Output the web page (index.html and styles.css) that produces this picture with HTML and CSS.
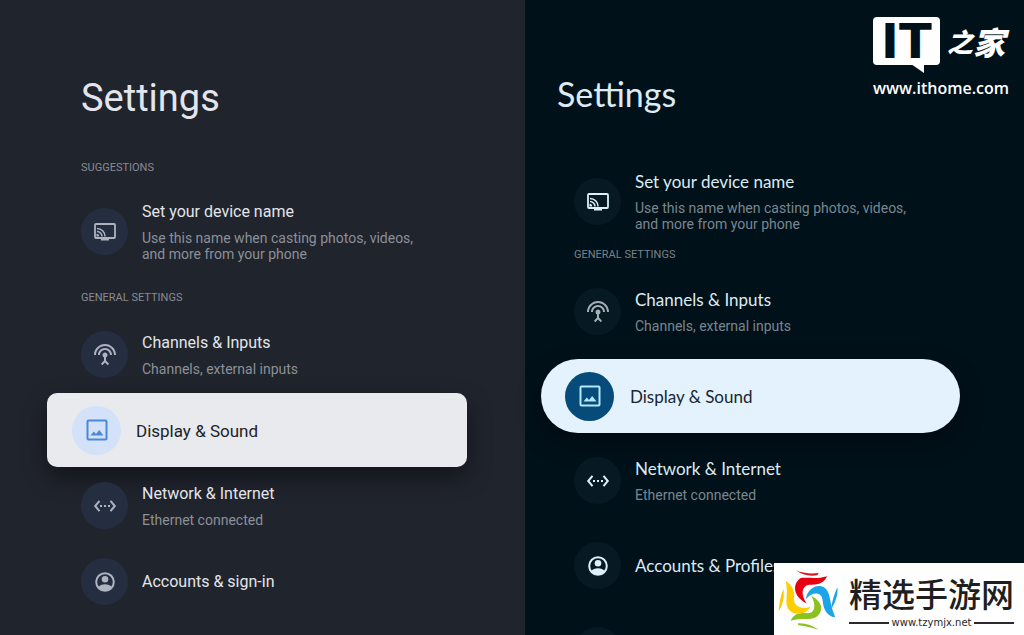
FILE: index.html
```html
<!DOCTYPE html>
<html lang="en">
<head>
<meta charset="utf-8">
<meta name="viewport" content="width=device-width, initial-scale=1">
<title>Settings</title>
<link rel="stylesheet" href="styles.css">
</head>
<body>
<svg class="sprite" aria-hidden="true">
  <symbol id="cast" viewBox="0 0 24 24">
    <rect x="2" y="4" width="20" height="14" rx="1" fill="none" stroke="currentColor" stroke-width="1.8"/>
    <path d="M8 18h8v2.500H8z" fill="currentColor"/>
    <path d="M4 8.500a8 8 0 0 1 8 8M4 11.500a5 5 0 0 1 5 5" fill="none" stroke="currentColor" stroke-width="1.500"/>
    <path d="M3.500 13.800a2.700 2.700 0 0 1 2.700 2.700H3.500z" fill="currentColor"/>
  </symbol>
  <symbol id="antenna" viewBox="0 0 24 24">
    <path fill="currentColor" d="M12 5c-3.870 0-7 3.130-7 7h2c0-2.760 2.240-5 5-5s5 2.240 5 5h2c0-3.870-3.130-7-7-7zm1 9.290c.88-.39 1.500-1.260 1.500-2.290 0-1.380-1.120-2.500-2.500-2.500S9.500 10.620 9.500 12c0 1.020.62 1.900 1.500 2.290v3.300L8 20.800l1.300 1.400 2.700-2.800 2.700 2.800 1.300-1.400-3-3.210v-3.300zM12 1C5.930 1 1 5.930 1 12h2c0-4.970 4.030-9 9-9s9 4.030 9 9h2c0-6.070-4.930-11-11-11z"/>
  </symbol>
  <symbol id="image" viewBox="0 0 24 24">
    <rect x="2.500" y="2.500" width="19" height="19" rx="1" fill="none" stroke="currentColor" stroke-width="2"/>
    <path d="M5.500 17.500l3.300-4 2.200 2.600 3.200-4.100 4.300 5.500z" fill="currentColor"/>
  </symbol>
  <symbol id="ethernet" viewBox="0 0 24 24">
    <path d="M6.500 6.800L2.200 12l4.300 5.200M17.500 6.800l4.300 5.200-4.300 5.200" fill="none" stroke="currentColor" stroke-width="2"/>
    <path d="M7 11h2v2H7zM11 11h2v2h-2zM15 11h2v2h-2z" fill="currentColor"/>
  </symbol>
  <symbol id="account" viewBox="0 0 24 24">
    <circle cx="12" cy="12" r="8.800" fill="none" stroke="currentColor" stroke-width="2"/>
    <circle cx="12" cy="9.300" r="3.300" fill="currentColor"/>
    <path d="M5 17.200c1.500-2 4.200-3 7-3s5.500 1 7 3c-1.700 2.500-4.200 3.800-7 3.800s-5.300-1.300-7-3.800z" fill="currentColor"/>
  </symbol>
</svg>

<main class="compare">
  <section class="panel panel-classic">
    <h1 class="title">Settings</h1>
    <h2 class="label">SUGGESTIONS</h2>
    <ul class="list">
      <li><button type="button" class="item">
        <span class="badge"><svg class="icon"><use href="#cast"/></svg></span>
        <span class="text"><span class="name">Set your device name</span><span class="note">Use this name when casting photos, videos,<br>and more from your phone</span></span>
      </button></li>
    </ul>
    <h2 class="label">GENERAL SETTINGS</h2>
    <ul class="list">
      <li><button type="button" class="item">
        <span class="badge"><svg class="icon"><use href="#antenna"/></svg></span>
        <span class="text"><span class="name">Channels &amp; Inputs</span><span class="note">Channels, external inputs</span></span>
      </button></li>
      <li><button type="button" class="item selected">
        <span class="badge"><svg class="icon"><use href="#image"/></svg></span>
        <span class="text"><span class="name">Display &amp; Sound</span></span>
      </button></li>
      <li><button type="button" class="item">
        <span class="badge"><svg class="icon"><use href="#ethernet"/></svg></span>
        <span class="text"><span class="name">Network &amp; Internet</span><span class="note">Ethernet connected</span></span>
      </button></li>
      <li><button type="button" class="item">
        <span class="badge"><svg class="icon"><use href="#account"/></svg></span>
        <span class="text"><span class="name">Accounts &amp; sign-in</span></span>
      </button></li>
    </ul>
  </section>

  <section class="panel panel-modern">
    <h1 class="title">Settings</h1>
    <ul class="list">
      <li><button type="button" class="item intro">
        <span class="badge"><svg class="icon"><use href="#cast"/></svg></span>
        <span class="text"><span class="name">Set your device name</span><span class="note">Use this name when casting photos, videos,<br>and more from your phone</span></span>
      </button></li>
    </ul>
    <h2 class="label">GENERAL SETTINGS</h2>
    <ul class="list">
      <li><button type="button" class="item">
        <span class="badge dim"><svg class="icon"><use href="#antenna"/></svg></span>
        <span class="text"><span class="name">Channels &amp; Inputs</span><span class="note">Channels, external inputs</span></span>
      </button></li>
      <li><button type="button" class="item selected">
        <span class="badge"><svg class="icon"><use href="#image"/></svg></span>
        <span class="text"><span class="name">Display &amp; Sound</span></span>
      </button></li>
      <li><button type="button" class="item">
        <span class="badge"><svg class="icon"><use href="#ethernet"/></svg></span>
        <span class="text"><span class="name">Network &amp; Internet</span><span class="note">Ethernet connected</span></span>
      </button></li>
      <li><button type="button" class="item">
        <span class="badge"><svg class="icon"><use href="#account"/></svg></span>
        <span class="text"><span class="name">Accounts &amp; Profiles</span></span>
      </button></li>
      <li><span class="item"><span class="badge"></span></span></li>
    </ul>
  </section>
</main>

<aside class="ithome">
  <div class="ithome-mark">
    <span class="bubble">IT</span>
    <span class="brush" lang="zh-CN"><span>之</span><span class="brush-large">家</span></span>
  </div>
  <span class="ithome-url">www.ithome.com</span>
</aside>

<aside class="tzymjx">
  <svg class="swirl" viewBox="0 0 210 210" aria-hidden="true">
    <path fill="#d9141e" d="M66 19C85 28 110 30 134 27L130 34C105 38 82 32 66 19z"/>
    <path fill="#e60012" d="M98 118C60 100 52 62 80 42C105 40 130 46 159 37C150 58 130 64 105 62C82 66 80 92 98 118z"/>
    <path fill="#1ba4e8" d="M95 106C102 70 132 58 153 72C172 88 164 115 184 160C158 156 148 135 146 110C144 82 115 82 95 106z"/>
    <path fill="#1ba4e8" d="M190 70C194 92 182 118 171 137C174 112 180 92 190 70z"/>
    <path fill="#8cc220" d="M112 95C144 112 150 138 130 157C112 172 84 160 50 170C58 150 78 144 100 148C122 148 128 126 112 95z"/>
    <path fill="#8cc220" d="M72 178C95 177 116 184 134 197C114 191 94 187 72 183z"/>
    <path fill="#ffce00" d="M110 128C92 156 54 156 41 132C32 112 44 90 35 51C54 62 64 82 60 106C60 128 84 138 110 128z"/>
    <path fill="#fcc800" d="M28 75C33 98 25 124 14 142C15 118 20 96 28 75z"/>
  </svg>
  <div class="tzymjx-text">
    <span class="tzymjx-name" lang="zh-CN">精选手游网</span>
    <span class="tzymjx-url">www.tzymjx.net</span>
  </div>
</aside>
</body>
</html>
```
FILE: styles.css
```css
* { box-sizing: border-box; }

body {
  margin: 0;
  position: relative;
  height: 100vh;
  overflow: hidden;
  background: #00111a;
  font-family: Roboto, "Liberation Sans", sans-serif;
}

.sprite { display: none; }

.compare {
  display: grid;
  grid-template-columns: 525fr 499fr;
  height: 100vh;
  overflow: hidden;
}

.title, .label, .list { margin: 0; padding: 0; font-weight: 400; }
.title { line-height: 48px; }
.label { font-size: 11px; line-height: 16px; }
.list { list-style: none; display: flex; flex-direction: column; }

.item {
  display: flex;
  align-items: center;
  gap: 14px;
  width: 100%;
  min-height: 75px;
  padding: 14px 0 14px 34px;
  border: 0;
  background: none;
  color: inherit;
  font: inherit;
  text-align: left;
}

.badge {
  display: grid;
  place-items: center;
  flex: none;
  width: 47px;
  height: 47px;
  border-radius: 50%;
}
.icon { width: 24px; height: 24px; }

.text { display: flex; flex-direction: column; gap: 8px; padding-top: 1px; white-space: nowrap; }
.name { font-size: 17px; line-height: 20px; }
.note { font-size: 14px; line-height: 16px; }

.selected { min-height: 74px; padding-top: 12px; padding-bottom: 12px; }
.selected .badge { width: 49px; height: 49px; }

/* Dark grey theme */
.panel-classic { padding: 74px 58px 0 47px; background: #20242d; color: #e3e5ea; }
.panel-classic .title { margin: 0 0 38px 34px; font-size: 38px; }
.panel-classic .label { margin: 0 0 11px 34px; color: #888b93; }
.panel-classic .list { gap: 1px; }
.panel-classic .list + .label { margin-top: 14px; }
.panel-classic .name { font-size: 16px; }
.panel-classic .note { color: #8c9098; }
.panel-classic .badge { background: #252e41; color: #adb4c0; }
.panel-classic .selected {
  gap: 15px;
  padding-left: 25px;
  border-radius: 10px;
  background: #e8eaee;
  color: #202227;
  box-shadow: 0 10px 24px rgba(0, 0, 0, 0.45);
}
.panel-classic .selected .badge { background: #d3e1f9; color: #4a88d8; }
.panel-classic .selected .name { font-size: 17px; }

/* Deep blue theme */
.panel-modern { padding: 70px 64px 0 16px; background: #00111a; color: #dcebf4; }
.panel-modern .title { margin: 0 0 53px 16px; font-family: Lato, sans-serif; font-size: 34px; }
.panel-modern .label { margin: 15px 0 11px 33px; color: #77828a; }
.panel-modern .list { gap: 10px; }
.panel-modern .item { padding-left: 33px; }
.panel-modern .intro { padding-top: 0; padding-bottom: 0; min-height: 61px; }
.panel-modern .name { font-family: Lato, sans-serif; }
.panel-modern .note { color: #7a868f; }
.panel-modern .badge { background: #071a23; color: #dcf0f8; }
.panel-modern .badge.dim { color: #a5b0b6; }
.panel-modern .item.selected {
  gap: 16px;
  padding-left: 24px;
  border-radius: 37px;
  background: #e3f2fd;
  color: #17262f;
  box-shadow: 0 10px 24px rgba(0, 0, 0, 0.4);
}
.panel-modern .selected .badge { background: #064b7a; color: #b5e8fa; }

/* Watermark, top right */
.ithome {
  position: absolute;
  top: 17px;
  right: 15px;
  display: flex;
  flex-direction: column;
  align-items: flex-start;
  gap: 13px;
  color: #fff;
}
.ithome-mark { display: flex; align-items: center; gap: 7px; }
.bubble {
  position: relative;
  width: 67px;
  height: 48px;
  border-radius: 4px;
  background: #fff;
  color: #00111a;
  font-family: "DejaVu Sans", sans-serif;
  font-size: 48px;
  font-weight: 700;
  line-height: 48px;
  text-align: center;
}
.bubble::after {
  content: "";
  position: absolute;
  left: 38px;
  top: 47px;
  border-top: 9px solid #fff;
  border-left: 13px solid transparent;
}
.brush {
  display: flex;
  align-items: center;
  font-family: "Noto Sans CJK SC", sans-serif;
  font-size: 26px;
  font-style: italic;
  font-weight: 900;
  line-height: 48px;
}
.brush-large { font-size: 32px; }
.ithome-url { font-family: "Open Sans", sans-serif; font-size: 16px; font-weight: 600; line-height: 20px; }

/* Watermark, bottom right */
.tzymjx {
  position: absolute;
  right: 0;
  bottom: 0;
  display: flex;
  align-items: center;
  gap: 5px;
  height: 72px;
  padding-right: 10px;
  background: #fff;
  color: #1f1f1f;
}
.swirl { width: 70px; height: 70px; }
.tzymjx-text { display: flex; flex-direction: column; }
.tzymjx-name {
  font-family: "Noto Sans CJK SC", sans-serif;
  font-size: 33px;
  font-weight: 500;
  line-height: 48px;
}
.tzymjx-url {
  display: flex;
  align-items: center;
  gap: 3px;
  font-family: "DejaVu Sans", sans-serif;
  font-size: 10px;
  line-height: 12px;
}
.tzymjx-url::before, .tzymjx-url::after { content: ""; flex: 1; height: 2px; background: #2a2a2a; }
```
